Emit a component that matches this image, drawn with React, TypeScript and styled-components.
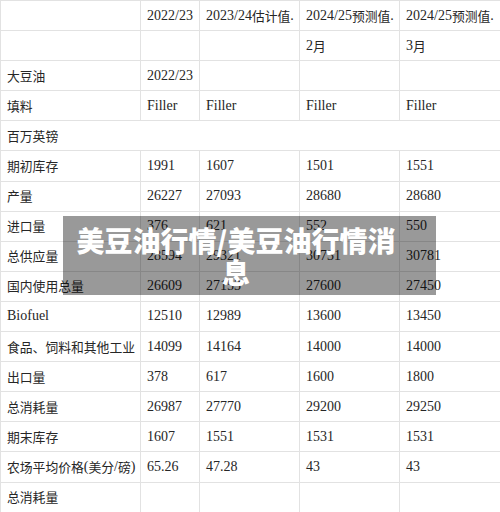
import React from "react";
import styled, { createGlobalStyle } from "styled-components";

const GlobalStyle = createGlobalStyle`
  html, body {
    margin: 0;
    padding: 0;
    background: #ffffff;
    overflow: hidden;
  }
  body {
    font-family: "Liberation Serif", "Noto Sans CJK SC", serif;
    color: #262626;
  }
`;

const Page = styled.div`
  position: relative;
  width: 500px;
  height: 512px;
  overflow: hidden;
`;

const Grid = styled.div`
  display: grid;
  grid-template-columns: 140px 59px 100px 100px 141px;
  grid-auto-rows: 30.1px;
  width: 541px;
  border-top: 1px solid #e2e2e2;
  border-left: 1px solid #e2e2e2;
`;

const Cell = styled.div<{ $span?: boolean }>`
  box-sizing: border-box;
  display: flex;
  align-items: center;
  padding: 0 6px;
  border-right: 1px solid #e2e2e2;
  border-bottom: 1px solid #e2e2e2;
  font-size: 14px;
  line-height: 18px;
  white-space: nowrap;
  overflow: visible;
  grid-column: ${(p) => (p.$span ? "1 / -1" : "auto")};
`;

const Zh = styled.span`
  font-family: "Noto Sans CJK SC", sans-serif;
  font-size: 12.8px;
`;

const Overlay = styled.div`
  position: absolute;
  left: 63px;
  top: 216px;
  width: 373px;
  height: 79px;
  box-sizing: border-box;
  padding: 0 41px 0 14px;
  display: flex;
  align-items: center;
  justify-content: center;
  background: rgba(0, 0, 0, 0.4);
`;

const Title = styled.div`
  color: #ffffff;
  font-family: "Noto Sans CJK SC", sans-serif;
  font-weight: 900;
  font-size: 28px;
  line-height: 32px;
  text-align: center;
  white-space: nowrap;
`;

const cjk = /([\u3000-\u303f\u3400-\u9fff\uff00-\uffef]+)/;

function rich(text: string) {
  return text.split(cjk).map((part, i) =>
    part === "" ? null : cjk.test(part) ? <Zh key={i}>{part}</Zh> : <React.Fragment key={i}>{part}</React.Fragment>
  );
}

type Row = { cells: string[]; span?: boolean };

const rows: Row[] = [
  { cells: ["", "2022/23", "2023/24估计值.", "2024/25预测值.", "2024/25预测值."] },
  { cells: ["", "", "", "2月", "3月"] },
  { cells: ["大豆油", "2022/23", "", "", ""] },
  { cells: ["填料", "Filler", "Filler", "Filler", "Filler"] },
  { cells: ["百万英镑"], span: true },
  { cells: ["期初库存", "1991", "1607", "1501", "1551"] },
  { cells: ["产量", "26227", "27093", "28680", "28680"] },
  { cells: ["进口量", "376", "621", "552", "550"] },
  { cells: ["总供应量", "28594", "29321", "30731", "30781"] },
  { cells: ["国内使用总量", "26609", "27153", "27600", "27450"] },
  { cells: ["Biofuel", "12510", "12989", "13600", "13450"] },
  { cells: ["食品、饲料和其他工业", "14099", "14164", "14000", "14000"] },
  { cells: ["出口量", "378", "617", "1600", "1800"] },
  { cells: ["总消耗量", "26987", "27770", "29200", "29250"] },
  { cells: ["期末库存", "1607", "1551", "1531", "1531"] },
  { cells: ["农场平均价格(美分/磅)", "65.26", "47.28", "43", "43"] },
  { cells: ["总消耗量", "", "", "", ""] },
];

export default function App() {
  return (
    <>
      <GlobalStyle />
      <Page>
        <Grid>
          {rows.map((row, r) =>
            row.cells.map((c, i) => (
              <Cell key={`${r}-${i}`} $span={row.span}>
                {rich(c)}
              </Cell>
            ))
          )}
        </Grid>
        <Overlay>
          <Title>
            美豆油行情/美豆油行情消
            <br />息
          </Title>
        </Overlay>
      </Page>
    </>
  );
}
